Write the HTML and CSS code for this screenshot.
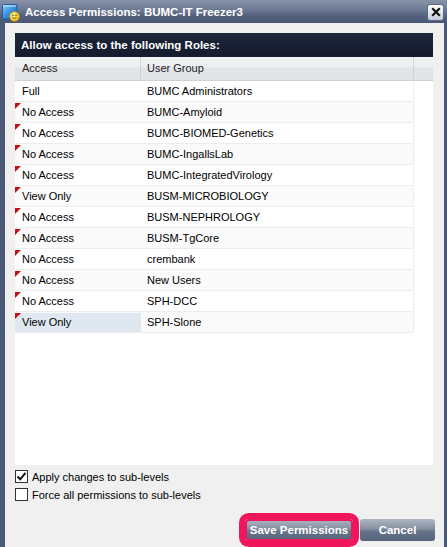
FILE: index.html
```html
<!DOCTYPE html>
<html>
<head>
<meta charset="utf-8">
<link rel="stylesheet" href="styles.css">
</head>
<body>
<div class="window">
  <div class="titlebar">
    <svg class="app-icon" width="19" height="19" viewBox="0 0 19 19">
      <defs>
        <linearGradient id="cube" x1="0" y1="0" x2="1" y2="1">
          <stop offset="0" stop-color="#8fd4ff"/>
          <stop offset="0.45" stop-color="#3d95e0"/>
          <stop offset="1" stop-color="#1a58a8"/>
        </linearGradient>
        <radialGradient id="face" cx="0.4" cy="0.35" r="0.7">
          <stop offset="0" stop-color="#fff7a8"/>
          <stop offset="1" stop-color="#f2ba00"/>
        </radialGradient>
      </defs>
      <rect x="1.5" y="1.5" width="14.5" height="14.5" rx="1" fill="url(#cube)" stroke="#245a98"/>
      <path d="M2.5 3 L15 3" fill="none" stroke="#d8f2ff" stroke-width="1"/>
      <circle cx="13.5" cy="13.5" r="4.8" fill="url(#face)" stroke="#c99500" stroke-width="0.7"/>
      <circle cx="12" cy="12.3" r="0.8" fill="#5a3a00"/>
      <circle cx="15" cy="12.3" r="0.8" fill="#5a3a00"/>
      <path d="M11.4 14.4 Q13.5 16.6 15.6 14.4" fill="none" stroke="#5a3a00" stroke-width="0.8"/>
    </svg>
    <span class="title">Access Permissions: BUMC-IT Freezer3</span>
    <div class="close">
      <svg width="10" height="10" viewBox="0 0 10 10"><path d="M2 2 L8 8 M8 2 L2 8" stroke="#111" stroke-width="2.2" stroke-linecap="square"/></svg>
    </div>
  </div>
  <div class="body">
    <div class="panel-header">Allow access to the following Roles:</div>
    <div class="grid">
      <div class="grid-head">
        <div class="hcell c1">Access</div>
        <div class="hcell c2">User Group</div>
        <div class="hcell c3"></div>
      </div>
      <div class="grid-body">
        <div class="row"><div class="cell c1">Full</div><div class="cell c2">BUMC Administrators</div></div>
        <div class="row alt"><div class="cell c1 dirty">No Access</div><div class="cell c2">BUMC-Amyloid</div></div>
        <div class="row"><div class="cell c1 dirty">No Access</div><div class="cell c2">BUMC-BIOMED-Genetics</div></div>
        <div class="row alt"><div class="cell c1 dirty">No Access</div><div class="cell c2">BUMC-IngallsLab</div></div>
        <div class="row"><div class="cell c1 dirty">No Access</div><div class="cell c2">BUMC-IntegratedVirology</div></div>
        <div class="row alt"><div class="cell c1 dirty">View Only</div><div class="cell c2">BUSM-MICROBIOLOGY</div></div>
        <div class="row"><div class="cell c1 dirty">No Access</div><div class="cell c2">BUSM-NEPHROLOGY</div></div>
        <div class="row alt"><div class="cell c1 dirty">No Access</div><div class="cell c2">BUSM-TgCore</div></div>
        <div class="row"><div class="cell c1 dirty">No Access</div><div class="cell c2">crembank</div></div>
        <div class="row alt"><div class="cell c1 dirty">No Access</div><div class="cell c2">New Users</div></div>
        <div class="row"><div class="cell c1 dirty">No Access</div><div class="cell c2">SPH-DCC</div></div>
        <div class="row alt"><div class="cell c1 dirty selected">View Only</div><div class="cell c2">SPH-Slone</div></div>
      </div>
    </div>
    <div class="options">
      <label class="opt">
        <span class="box"><svg width="11" height="11" viewBox="0 0 11 11"><path d="M1.5 5.5 L4.2 8.3 L9.5 1.8" fill="none" stroke="#111" stroke-width="2"/></svg></span>
        <span>Apply changes to sub-levels</span>
      </label>
      <label class="opt">
        <span class="box"></span>
        <span>Force all permissions to sub-levels</span>
      </label>
    </div>
    <div class="footer">
      <button class="btn save">Save Permissions</button>
      <button class="btn cancel">Cancel</button>
    </div>
  </div>
</div>
</body>
</html>
```
FILE: styles.css
```css
html, body {
  margin: 0;
  padding: 0;
  background: #4b5876;
}
.window {
  width: 447px;
  height: 547px;
  display: flex;
  flex-direction: column;
  background: #4c5977;
  font-family: "Liberation Sans", Arial, sans-serif;
  overflow: hidden;
}
.titlebar {
  height: 23px;
  flex: none;
  display: flex;
  align-items: center;
  background: linear-gradient(#8893aa, #6b7892 45%, #52607d 70%, #4a5875);
  box-sizing: border-box;
  padding: 0 3px 0 1px;
}
.app-icon {
  flex: none;
  margin-top: 1px;
}
.title {
  color: #fff;
  font-weight: bold;
  font-size: 11.5px;
  margin-left: 5px;
  flex: 1;
  margin-top: 1px;
}
.close {
  width: 15px;
  height: 15px;
  border: 1px solid #5f6a82;
  border-radius: 3px;
  background: linear-gradient(#ffffff, #dfe3ea 55%, #c3c9d3);
  display: flex;
  align-items: center;
  justify-content: center;
  margin-top: 1px;
}
.body {
  flex: 1;
  margin: 0 3px 0 5px;
  background: #f0f0f0;
  padding: 10px 11px 0 10px;
  display: flex;
  flex-direction: column;
}
.panel-header {
  height: 24px;
  background: linear-gradient(#1e263b, #151b2d);
  color: #fff;
  font-weight: bold;
  font-size: 11.5px;
  line-height: 24px;
  padding-left: 6px;
}
.grid {
  display: flex;
  flex-direction: column;
}
.grid-head {
  height: 24px;
  display: flex;
  background: linear-gradient(#f0f1f3 0%, #eceef1 45%, #e1e5e8 46%, #e1e5e8 100%);
  border-bottom: 1px solid #d0d3d6;
  box-sizing: border-box;
}
.hcell {
  font-size: 11px;
  color: #222;
  line-height: 23px;
  box-sizing: border-box;
  border-right: 1px solid #d0d3d6;
}
.hcell.c1 { width: 126px; padding-left: 7px; }
.hcell.c2 { width: 273px; padding-left: 6px; }
.hcell.c3 { flex: 1; border-right: none; }
.grid-body {
  height: 384px;
  background: #fff;
}
.row {
  width: 399px;
  height: 21px;
  display: flex;
  box-sizing: border-box;
  border: 1px solid #ededed;
  border-top-color: #fff;
  border-left: none;
  background: #fff;
}
.row.alt {
  background: #fafafa;
  border-top-color: #fafafa;
}
.cell {
  font-size: 11px;
  color: #000;
  line-height: 19px;
  box-sizing: border-box;
  position: relative;
}
.cell.c1 { width: 126px; padding-left: 7px; }
.cell.c2 { flex: 1; padding-left: 6px; }
.cell.selected { background: #dfe8f0; }
.cell.dirty::before {
  content: "";
  position: absolute;
  left: 0;
  top: 0;
  border-top: 6px solid #c41010;
  border-right: 6px solid transparent;
}
.options {
  padding-top: 5px;
  display: flex;
  flex-direction: column;
  gap: 5px;
}
.opt {
  display: flex;
  align-items: center;
  font-size: 11px;
  color: #000;
  height: 13px;
}
.box {
  width: 13px;
  height: 13px;
  box-sizing: border-box;
  border: 1px solid #333;
  background: #fff;
  display: flex;
  align-items: center;
  justify-content: center;
  margin-right: 4px;
}
.footer {
  margin-top: 18px;
  display: flex;
  justify-content: flex-end;
  gap: 7px;
  margin-right: -2px;
}
.btn {
  height: 22px;
  border: none;
  border-radius: 3px;
  background: linear-gradient(#aeb6c2, #8590a2 45%, #66738a 55%, #56637b);
  color: #fff;
  font-family: "Liberation Sans", Arial, sans-serif;
  font-weight: bold;
  font-size: 11.5px;
  padding: 0;
  line-height: 22px;
  text-align: center;
}
.btn.save {
  width: 108px;
  box-shadow: 0 0 0 6px #f0165c, inset 0 0 0 2px #f0165c;
  border-radius: 4px;
}
.btn.cancel {
  width: 75px;
}
```
